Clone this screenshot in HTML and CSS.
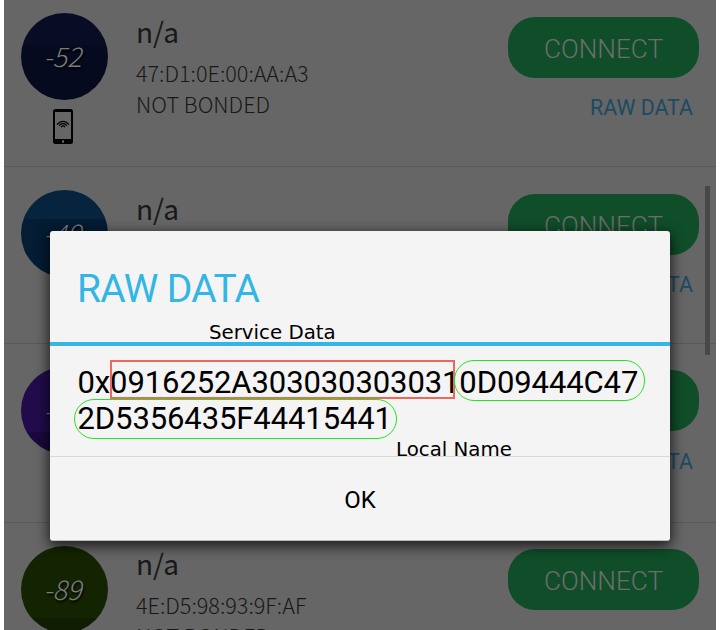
FILE: index.html
```html
<!DOCTYPE html>
<html lang="en">
<head>
<meta charset="utf-8">
<title>Raw data</title>
<link rel="stylesheet" href="styles.css">
</head>
<body>
<main class="screen">
  <section class="device first">
    <div class="signal"><div class="rssi navy"><span>-52</span></div>
      <svg class="phone" width="22" height="36" viewBox="0 0 22 36">
        <rect x="1" y="0" width="20" height="35" rx="2.5" fill="#000"/>
        <rect x="3" y="3" width="16" height="27" fill="#666"/>
        <rect x="10" y="31.5" width="2" height="2" fill="#777"/>
        <g fill="none" stroke="#000" stroke-width="1.2"><path d="M5 15.5Q11 9.5 17 15.5M7 16.7Q11 12.7 15 16.7M9 18Q11 15.8 13 18"/></g>
      </svg>
    </div>
    <div class="info"><h2>n/a</h2><p class="addr">47:D1:0E:00:AA:A3</p><p class="bond">NOT BONDED</p></div>
    <div class="actions"><button>CONNECT</button><a>RAW DATA</a></div>
  </section>
  <section class="device second">
    <div class="signal"><div class="rssi blue"><span>-49</span></div></div>
    <div class="info"><h2>n/a</h2></div>
    <div class="actions"><button>CONNECT</button><a>RAW DATA</a></div>
  </section>
  <section class="device third">
    <div class="signal"><div class="rssi purple"><span>-77</span></div></div>
    <div class="info"></div>
    <div class="actions"><button>CONNECT</button><a>RAW DATA</a></div>
  </section>
  <section class="device fourth">
    <div class="signal"><div class="rssi green"><span>-89</span></div></div>
    <div class="info"><h2>n/a</h2><p class="addr">4E:D5:98:93:9F:AF</p><p class="bond">NOT BONDED</p></div>
    <div class="actions"><button>CONNECT</button></div>
  </section>
  <div class="scrollbar"></div>
</main>
<div class="dialog">
  <h1><span>RAW DATA</span></h1>
  <div class="payload">0x0916252A3030303030310D09444C47<br>2D5356435F44415441</div>
  <div class="ok">OK</div>
  <span class="note service">Service Data</span>
  <span class="note local">Local Name</span>
  <i class="mark red"></i><i class="mark lime one"></i><i class="mark lime two"></i>
</div>
</body>
</html>
```
FILE: styles.css
```css
* { box-sizing: border-box; margin: 0; padding: 0; }
body { width: 726px; height: 630px; overflow: hidden; background: #fff; position: relative; }
.screen { position: relative; width: 712px; height: 630px; margin-left: 4px; background: #666; overflow: hidden; font-family: "Noto Sans CJK SC", sans-serif; }
.device { display: flex; height: 177px; padding: 23px 17px 0; border-bottom: 1px solid #595959; }
.first { height: 167px; padding-top: 13px; }
.third { height: 179px; }
.fourth { border: 0; }
.signal { width: 87px; flex: none; }
.rssi { height: 87px; border-radius: 50%; padding: 0 4px 1px 0; display: flex; align-items: center; justify-content: center; font-size: 27px; line-height: 30px; font-style: italic; font-weight: 300; color: #7c7c7c; text-shadow: 1px 2px 2px #000; }
.navy { background: linear-gradient(#080c24 37%, #050a1e 37%); }
.blue { background: linear-gradient(#06243e 33%, #041c34 33%); }
.purple { background: linear-gradient(#220b4b 75%, #1b083d 75%); }
.green { background: linear-gradient(#142402 83%, #101d02 83%); }
.phone { display: block; margin: 9px 0 0 31px; }
.info { width: 340px; margin: -2px 0 0 28px; flex: none; white-space: nowrap; color: #181818; }
h2 { font-size: 28px; line-height: 40px; font-weight: 400; }
.info p { font-size: 21.6px; line-height: 31px; font-weight: 300; }
.addr { margin-top: 6px; }
.fourth .info { margin-top: -3px; }
.actions { width: 191px; margin: 4px 0 0 32px; flex: none; display: flex; flex-direction: column; align-items: flex-end; }
.third .actions, .fourth .actions { margin-top: 3px; }
button { width: 191px; height: 61px; padding-top: 3px; border: 0; border-radius: 27px; background: #104e29; color: #6d6d6d; font: 300 26.2px/58px Roboto, sans-serif; }
.actions a { font: 400 21.4px/30px Roboto, sans-serif; margin: 15px 6px 0 0; color: #1d4a62; }
.third .actions a { margin-top: 16px; }
.scrollbar { position: absolute; left: 701px; top: 186px; width: 5px; height: 169px; background: #484848; }
.dialog { position: absolute; left: 50px; top: 231px; width: 620px; height: 310px; background: #f4f4f4; border-radius: 3px; border-bottom: 1px solid #bbb; box-shadow: 0 4px 14px 1px rgba(0,0,0,.75); font-family: Roboto, sans-serif; color: #000; }
h1 { height: 115px; padding: 35px 27px 0; border-bottom: 4px solid #33b5e5; font-size: 39px; letter-spacing: -.7px; line-height: 46px; font-weight: 400; color: #33b5e5; }
.payload { height: 111px; padding: 19px 27.5px 0; font-size: 31px; letter-spacing: -.1px; line-height: 36px; white-space: nowrap; border-bottom: 1px solid #d8d8d8; }
.ok { font-size: 24px; line-height: 87px; height: 83px; text-align: center; }
.note { position: absolute; font: 19.8px/24px "DejaVu Sans", sans-serif; white-space: nowrap; }
.service { left: 159px; top: 90px; }
.local { left: 346px; top: 207px; }
.mark { position: absolute; border: 1.5px solid #22e522; }
.red { left: 60px; top: 129px; width: 345px; height: 39px; border: 2px solid #f2655a; }
.lime { border-radius: 20px; height: 40px; }
.one { left: 404px; top: 129px; width: 191px; height: 41px; }
.two { left: 24px; top: 168px; width: 323px; }
```
